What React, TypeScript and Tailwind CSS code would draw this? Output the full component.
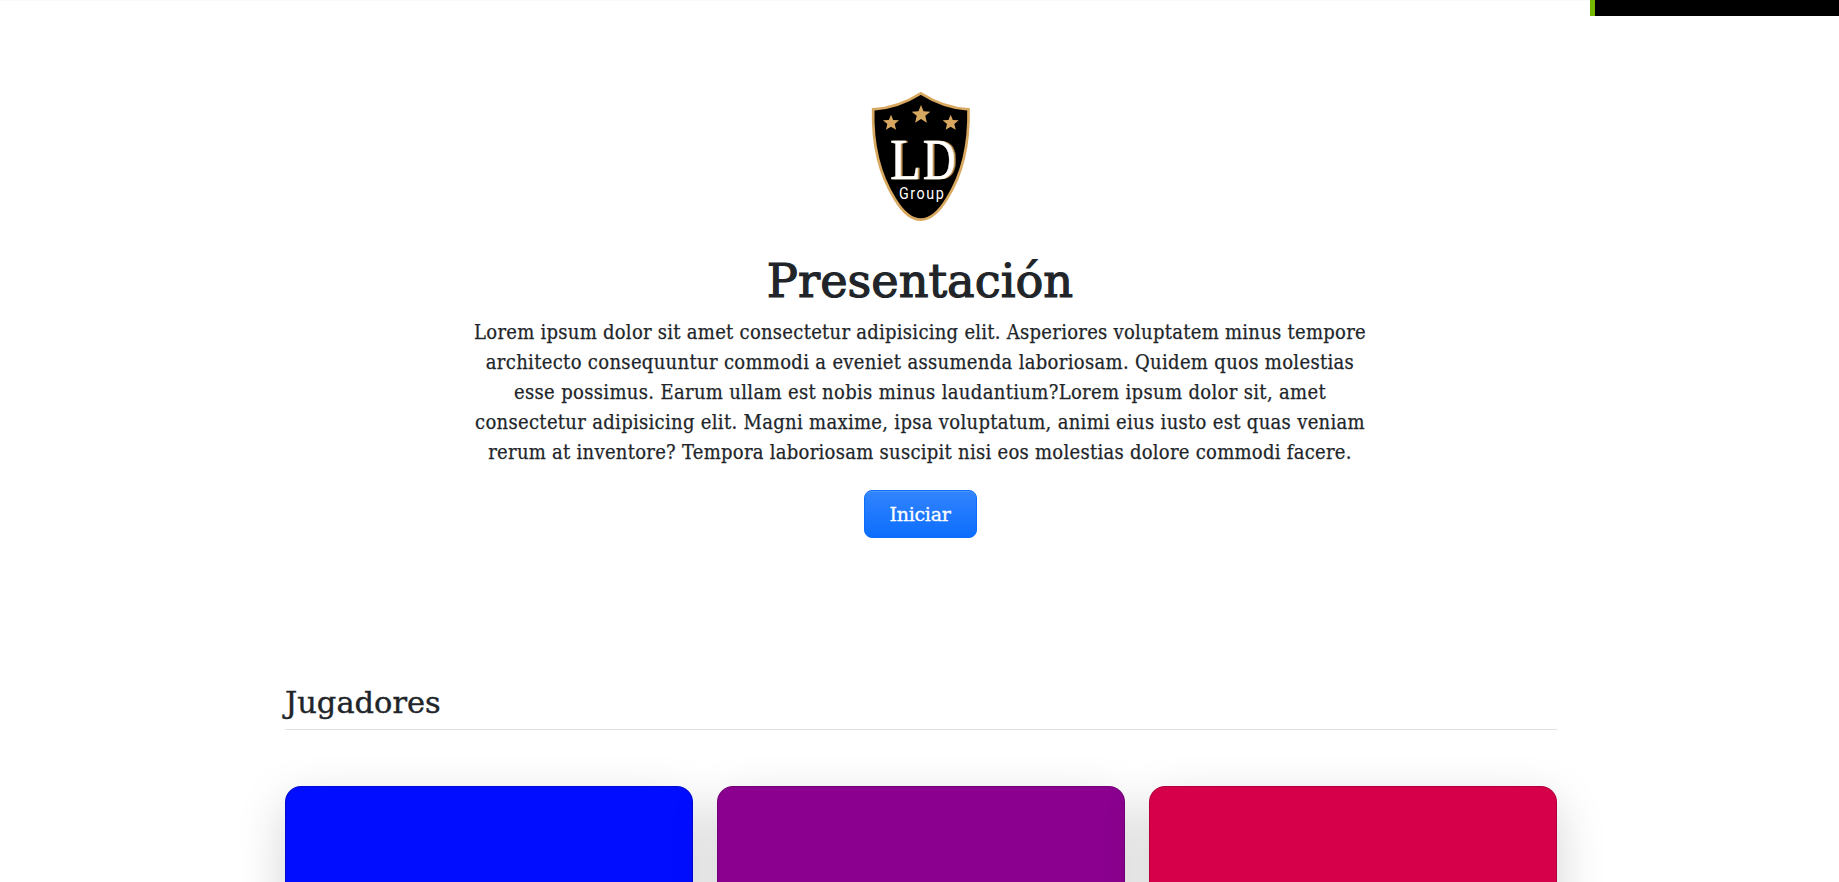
const intro = [
  { text: "Lorem ipsum dolor sit amet consectetur adipisicing elit. Asperiores voluptatem minus tempore", spacing: "tracking-[0.27px]" },
  { text: "architecto consequuntur commodi a eveniet assumenda laboriosam. Quidem quos molestias", spacing: "tracking-[0.325px]" },
  { text: "esse possimus. Earum ullam est nobis minus laudantium?Lorem ipsum dolor sit, amet", spacing: "tracking-[0.34px]" },
  { text: "consectetur adipisicing elit. Magni maxime, ipsa voluptatum, animi eius iusto est quas veniam", spacing: "tracking-[0.31px]" },
  { text: "rerum at inventore? Tempora laboriosam suscipit nisi eos molestias dolore commodi facere.", spacing: "tracking-[0.275px]" },
];

const players = ["bg-[#000dff]", "bg-[#8b008f]", "bg-[#d50049]"];

const STAR = "M0 -28 L7.6 -9.4 L28 -8 L12.8 4.6 L17.600 25 L0 14.2 L-17.600 25 L-12.8 4.6 L-28 -8 L-7.6 -9.4 Z";

function Logo() {
  return (
    <svg viewBox="0 0 420 450" className="h-[150px] w-[140px]" role="img">
      <path
        d="M212.500 40 Q143 84 69.500 88 C67 190 86 280 134 356 Q172 419 212.500 419 Q253 419 291 356 C339 280 358 190 355.500 88 Q282 84 212.500 40 Z"
        fill="#000"
        stroke="#d9a860"
        strokeWidth="8"
      />
      <g fill="#d9a860">
        <path d={STAR} transform="translate(213 103)" />
        <path d={STAR} transform="translate(123 128) scale(.86)" />
        <path d={STAR} transform="translate(302 128) scale(.86)" />
      </g>
      <g
        className="drop-shadow-[5px_0_0_#d9a860]"
        fontFamily="'Liberation Serif', serif"
        fontSize="173"
        fill="#fff"
        stroke="#fff"
        strokeWidth="1.5"
      >
        <text transform="translate(120 296) scale(.87 1)">L</text>
        <text transform="translate(218 296) scale(.79 1)">D</text>
      </g>
      <text
        transform="translate(147 358) scale(.86 1)"
        fontFamily="Roboto, sans-serif"
        fontSize="50"
        fill="#fff"
        textLength="156"
        lengthAdjust="spacing"
      >
        Group
      </text>
    </svg>
  );
}

export default function App() {
  return (
    <div className="h-[882px] overflow-hidden bg-white font-['DejaVu_Serif',serif] text-[#212529]">
      <header className="flex h-4 items-start justify-between">
        <div className="h-px grow bg-[#f8f9fa]" />
        <div className="h-4 w-[249px] border-l-[5px] border-[#76b900] bg-black" />
      </header>

      <main className="ml-[285px] w-[1272px]">
        <section className="flex flex-col items-center pt-16 pr-[2px]">
          <Logo />
          <h1 className="mt-4 h-[71px] text-[46.300px] leading-[70px] [-webkit-text-stroke:1.2px_#212529]">Presentación</h1>
          <div className="font-['DejaVu_Serif_Condensed','DejaVu_Serif',serif] text-xl leading-[30px] whitespace-nowrap [-webkit-text-stroke:0.25px_#212529]">
            {intro.map((line) => (
              <p key={line.text} className="text-center">
                <span className={line.spacing}>{line.text}</span>
              </p>
            ))}
          </div>
          <button className="mt-[23px] h-12 w-[113px] rounded-lg border border-[#0d6efd] bg-[#0d6efd] bg-linear-to-b from-white/15 to-white/0 text-[19px] tracking-[-0.25px] text-white shadow-[inset_0_1px_0_rgba(255,255,255,0.15)] [-webkit-text-stroke:0.3px_white]">
            Iniciar
          </button>
        </section>

        <section className="mt-[138px]">
          <h2 className="h-[54px] border-b border-[#dee2e6] text-[30.5px] leading-[54px] [-webkit-text-stroke:0.4px_#212529]">Jugadores</h2>
          <div className="grid grid-cols-3 gap-6 pt-14">
            {players.map((color) => (
              <article key={color} className={`h-[300px] rounded-2xl border border-black/[0.175] shadow-[0_16px_48px_rgba(0,0,0,0.175)] ${color}`} />
            ))}
          </div>
        </section>
      </main>
    </div>
  );
}
